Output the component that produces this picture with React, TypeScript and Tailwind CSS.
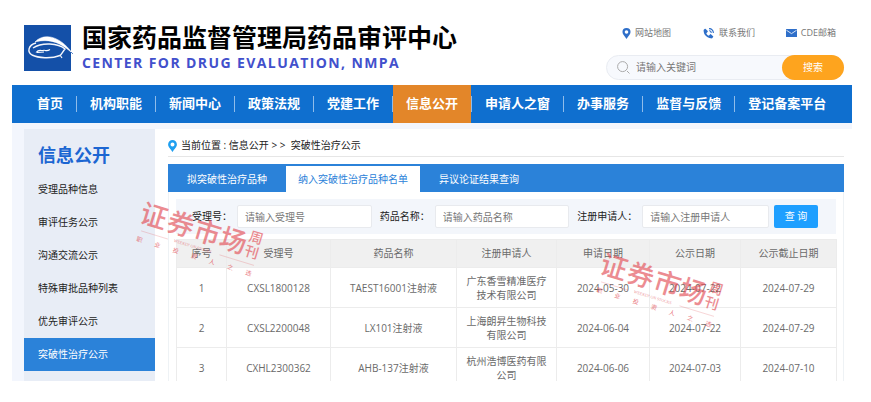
import { useState } from "react";
import { BiSolidPhoneCall } from "react-icons/bi";
import clsx from "clsx";

const NAV = ["首页", "机构职能", "新闻中心", "政策法规", "党建工作", "信息公开", "申请人之窗", "办事服务", "监督与反馈", "登记备案平台"];
const SIDE = ["受理品种信息", "审评任务公示", "沟通交流公示", "特殊审批品种列表", "优先审评公示", "突破性治疗公示"];
const TABS = ["拟突破性治疗品种", "纳入突破性治疗品种名单", "异议论证结果查询"];

const COLUMNS = [
  { label: "序号", width: "w-[50px]" },
  { label: "受理号", width: "w-[104px]" },
  { label: "药品名称", width: "w-[126px]" },
  { label: "注册申请人", width: "w-[100px]" },
  { label: "申请日期", width: "w-[93px]" },
  { label: "公示日期", width: "w-[91px]" },
  { label: "公示截止日期", width: "w-[96px]" },
];

const ROWS = [
  ["1", "CXSL1800128", "TAEST16001注射液", "广东香雪精准医疗技术有限公司", "2024-05-30", "2024-07-22", "2024-07-29"],
  ["2", "CXSL2200048", "LX101注射液", "上海朗昇生物科技有限公司", "2024-06-04", "2024-07-22", "2024-07-29"],
  ["3", "CXHL2300362", "AHB-137注射液", "杭州浩博医药有限公司", "2024-06-06", "2024-07-03", "2024-07-10"],
];

function Logo() {
  return (
    <svg viewBox="0 0 50 46" className="h-[46px] w-[50px] shrink-0" aria-hidden="true">
      <rect width="47" height="46" fill="#1450a8" />
      <path d="M11 17C18 9 34 8 49 29C38 18 26 13 11 17Z" fill="#fff" stroke="#fff" strokeWidth="0.5" />
      <path d="M12 18C4 20 3 27 8 30C14 33 27 34 36 30.5C38 29 39 26 41 24C34 18 18 17 9 23" fill="none" stroke="#f4f6fb" strokeWidth="1.4" />
      <path d="M36 30L38 33" stroke="#f4f6fb" strokeWidth="1.2" />
      <path d="M12 27.5C15 24 17 26 19 25.5C21 24.5 22 27 26 24.5M13 27.5L20 27" fill="none" stroke="#fff" strokeWidth="1.1" />
      <path d="M47 27L49 29" stroke="#5b86c8" strokeWidth="1" />
    </svg>
  );
}

function Pin({ className }: { className: string }) {
  return (
    <svg viewBox="0 0 9 12" className={className} aria-hidden="true">
      <path fillRule="evenodd" fill="currentColor" d="M4.5 0A4.4 4.4 0 0 0 .1 4.4C.1 7 2.6 8.6 4.5 12C6.4 8.6 8.9 7 8.9 4.4A4.4 4.4 0 0 0 4.5 0ZM4.5 2.4A2 2 0 1 1 4.5 6.4A2 2 0 1 1 4.5 2.4Z" />
    </svg>
  );
}

function Mail() {
  return (
    <svg viewBox="0 0 11 8" className="h-2 w-[11px] text-[#2f6fc9]" aria-hidden="true">
      <rect width="11" height="8" fill="currentColor" />
      <path d="M.4 1.2L5.5 4.6L10.6 1.2" fill="none" stroke="#fff" strokeWidth="0.8" />
    </svg>
  );
}

function Watermark({ className }: { className: string }) {
  return (
    <svg viewBox="0 0 130 90" className={clsx("pointer-events-none absolute h-[90px] w-[130px]", className)} fill="#e2474f" aria-hidden="true">
      <g transform="translate(20 24) rotate(17)" textAnchor="middle" fontFamily="'Liberation Serif', 'Noto Sans CJK SC', serif">
        <g fontSize="27" fontWeight="500" opacity="0.62">
          <text x="0" y="10">证</text>
          <text x="28" y="10">券</text>
          <text x="56" y="10">市</text>
          <text x="83" y="10">场</text>
          <text x="104" y="-4" fontSize="14">周</text>
          <text x="104" y="11" fontSize="14">刊</text>
        </g>
        <text x="46" y="19" fontSize="4" opacity="0.6">WEEKLY ON STOCKS</text>
        <path d="M-8 18H20M74 18H110" stroke="#e2474f" strokeWidth="0.5" opacity="0.4" />
        <g fontSize="6" opacity="0.75">
          {["职", "业", "投", "资", "人", "之", "选"].map((c, i) => (
            <text key={c} x={-7 + i * 19} y="29">{c}</text>
          ))}
        </g>
      </g>
    </svg>
  );
}

function Header() {
  return (
    <header className="flex h-[85px] shrink-0 items-start justify-between pt-[25px] pr-2 pl-3">
      <div className="flex gap-2">
        <Logo />
        <div className="-mt-1 whitespace-nowrap">
          <h1 className="text-[25px] leading-8 font-bold text-black">国家药品监督管理局药品审评中心</h1>
          <p className="text-sm leading-5 font-bold tracking-widest text-[#4250cc]">CENTER FOR DRUG EVALUATION, NMPA</p>
        </div>
      </div>
      <div className="w-[238px]">
        <div className="flex h-4 items-center justify-between pr-2 pl-4 text-[9px] text-[#777]">
          <a href="#map" className="flex items-center gap-1"><Pin className="h-[11px] w-[9px] text-[#2f6fc9]" />网站地图</a>
          <a href="#contact" className="flex items-center gap-1"><BiSolidPhoneCall className="size-[13px] text-[#2f6fc9]" />联系我们</a>
          <a href="#mail" className="flex items-center gap-1"><Mail />CDE邮箱</a>
        </div>
        <form className="mt-3.5 flex h-[25px] items-center rounded-full border border-[#e9ecf2] bg-[#f7f9fd]" onSubmit={(e) => e.preventDefault()}>
          <svg viewBox="0 0 13 13" className="ml-2.5 size-[13px] shrink-0" fill="none" stroke="#aaa" aria-hidden="true">
            <circle cx="5.6" cy="5.6" r="5" />
            <path d="M10 10L12.5 12.5" />
          </svg>
          <input aria-label="关键词" placeholder="请输入关键词" className="ml-1.5 min-w-0 flex-1 bg-transparent text-[10px] outline-none placeholder:text-[#777]" />
          <button type="submit" className="-mr-px h-[25px] w-[62px] rounded-full bg-[#fea41e] text-[10px] text-white">搜索</button>
        </form>
      </div>
    </header>
  );
}

function Nav() {
  return (
    <nav className="h-[38px] shrink-0 bg-[#0f6fcf] pl-3">
      <ul className="flex h-full text-[13px] font-bold whitespace-nowrap text-white">
        {NAV.map((n, i) => (
          <li key={n} className="flex items-center">
            <a href="#nav" className={clsx("flex h-full items-center px-[13px]", n === "信息公开" && "bg-[#e38629]")}>{n}</a>
            {i < NAV.length - 1 && <span className="h-4 w-px bg-[#8fbcea]" />}
          </li>
        ))}
      </ul>
    </nav>
  );
}

function Sidebar() {
  return (
    <aside className="mt-1.5 w-[131px] shrink-0 bg-[#e8edf6] pt-2">
      <h2 className="pl-3.5 text-lg leading-9 font-bold text-[#1c66d2]">信息公开</h2>
      <ul className="text-[10px]">
        {SIDE.map((s) => (
          <li key={s}>
            <a href="#side" className={clsx("flex h-[33px] items-center pl-3.5", s === "突破性治疗公示" ? "bg-[#2b82d9] text-white" : "text-[#222]")}>{s}</a>
          </li>
        ))}
      </ul>
    </aside>
  );
}

const field = "h-[23px] min-w-0 rounded-xs border border-[#e8eaee] bg-white px-[7px] outline-none placeholder:text-[#777]";

function QueryForm() {
  return (
    <form className="flex h-[35px] items-center bg-[#f3f6fb] pr-[18px] pl-4 whitespace-nowrap" onSubmit={(e) => e.preventDefault()}>
      <label htmlFor="acceptNo">受理号：</label>
      <input id="acceptNo" placeholder="请输入受理号" className={clsx(field, "mr-2 ml-[5px] flex-[15]")} />
      <label htmlFor="drug">药品名称：</label>
      <input id="drug" placeholder="请输入药品名称" className={clsx(field, "mr-2 ml-[5px] flex-[15]")} />
      <label htmlFor="applicant">注册申请人：</label>
      <input id="applicant" placeholder="请输入注册申请人" className={clsx(field, "mr-[5px] ml-[5px] flex-[14]")} />
      <button type="submit" className="h-[23px] w-11 rounded-xs bg-[#1e9fff] text-white">查 询</button>
    </form>
  );
}

export default function App() {
  const [tab, setTab] = useState(1);

  return (
    <div className="relative flex h-screen flex-col overflow-hidden bg-white pr-[19px] pb-[21px] pl-3 font-['Open_Sans','Noto_Sans_CJK_SC',sans-serif]">
      <Header />
      <Nav />
      <div className="flex min-h-0 flex-1 overflow-hidden bg-[#f3f6fd] pl-3">
        <Sidebar />
        <main className="mt-1.5 -mr-px min-w-0 flex-1 bg-white pt-1.5 pr-[9px] pl-[13px] text-[10px] text-[#222]">
          <div className="flex h-[22px] items-center gap-1 border-b border-[#e6e6e6]">
            <Pin className="h-3 w-[9px] text-[#1e9ff0]" />
            <span>当前位置 : 信息公开 &gt; &gt; &nbsp;突破性治疗公示</span>
          </div>

          <div className="mt-[7px] flex h-7 bg-[#2b82d9] pt-0.5">
            {TABS.map((t, i) => (
              <button
                key={t}
                type="button"
                onClick={() => setTab(i)}
                className={clsx(i === tab ? "bg-white px-3 text-[#2b82d9]" : "px-[19px] text-white")}
              >
                {t}
              </button>
            ))}
          </div>

          <div className="border-x border-[#eef2f5] px-[7px] pt-[7px]">
            <QueryForm />
            <table className="mt-[5px] w-full table-fixed border-collapse text-center text-[#6a6a6a]">
              <thead>
                <tr className="h-7 bg-[#f0f0f0]">
                  {COLUMNS.map((c) => (
                    <th key={c.label} className={clsx("border border-[#ececec] font-normal", c.width)}>{c.label}</th>
                  ))}
                </tr>
              </thead>
              <tbody>
                {ROWS.map((r) => (
                  <tr key={r[0]} className="h-10">
                    {r.map((v, i) => (
                      <td key={i} className="border border-[#ececec] px-2 leading-[14px]">{v}</td>
                    ))}
                  </tr>
                ))}
              </tbody>
            </table>
          </div>
        </main>
      </div>
      <Watermark className="top-[192px] left-[134px]" />
      <Watermark className="top-[243px] left-[594px]" />
    </div>
  );
}
